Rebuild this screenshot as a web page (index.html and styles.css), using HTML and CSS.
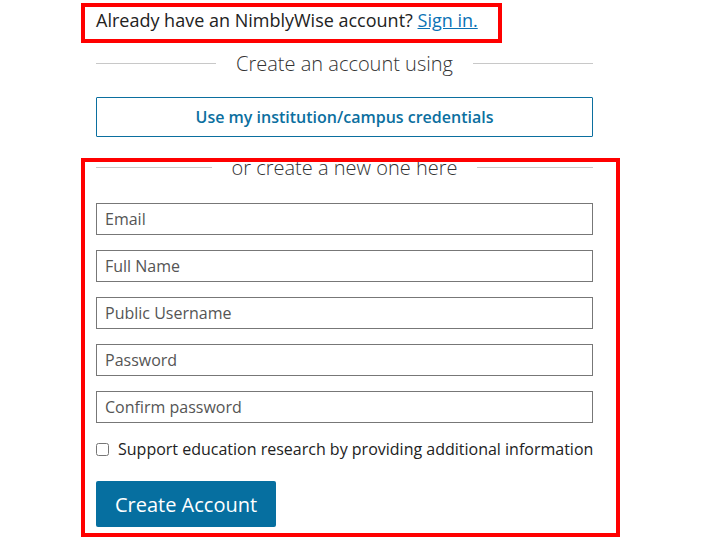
FILE: index.html
```html
<!DOCTYPE html>
<html>
<head>
<meta charset="utf-8">
<link rel="stylesheet" href="styles.css">
</head>
<body>
<div class="page">
  <div class="column">
    <p class="signin">Already have an NimblyWise account? <a href="#" class="link">Sign in.</a></p>
    <div class="divider divider-top"><span class="divider-text">Create an account using</span></div>
    <button class="btn-outline" type="button">Use my institution/campus credentials</button>
    <div class="divider divider-mid"><span class="divider-text">or create a new one here</span></div>
    <form class="form">
      <input class="field" type="text" placeholder="Email">
      <input class="field" type="text" placeholder="Full Name">
      <input class="field" type="text" placeholder="Public Username">
      <input class="field" type="password" placeholder="Password">
      <input class="field" type="password" placeholder="Confirm password">
      <label class="check-row"><input class="check" type="checkbox"><span>Support education research by providing additional information</span></label>
      <button class="btn-primary" type="button">Create Account</button>
    </form>
  </div>
  <div class="highlight highlight-signin"></div>
  <div class="highlight highlight-form"></div>
</div>
</body>
</html>
```
FILE: styles.css
```css
html, body {
  margin: 0;
  padding: 0;
  background: #fff;
}
body {
  font-family: "Open Sans", "DejaVu Sans", sans-serif;
  color: #222;
}
.page {
  position: relative;
  width: 712px;
  height: 553px;
  overflow: hidden;
}
.column {
  margin-left: 96px;
  width: 497px;
  display: flex;
  flex-direction: column;
}
.signin {
  margin: 0;
  padding-top: 8px;
  font-size: 18px;
  line-height: 24px;
  color: #222;
  white-space: nowrap;
}
.link {
  color: #0a72b5;
  text-decoration: underline;
}
.divider {
  display: flex;
  align-items: center;
  gap: 20px;
  height: 30px;
  color: #333;
  font-size: 20px;
  font-weight: 300;
}
.divider::before, .divider::after {
  content: "";
  flex: 1;
  height: 1px;
  background: #c8c8c8;
}
.divider-top {
  margin-top: 16px;
}
.divider-mid {
  margin-top: 15px;
}
.btn-outline {
  margin-top: 19px;
  height: 40px;
  border: 1px solid #0b6f9f;
  background: #fff;
  color: #0b6f9f;
  font-family: inherit;
  font-size: 16px;
  font-weight: 600;
  border-radius: 1px;
}
.form {
  margin: 21px 0 0;
  display: flex;
  flex-direction: column;
  gap: 15px;
}
.field {
  box-sizing: border-box;
  height: 32px;
  border: 1px solid #777;
  padding: 0 8px;
  font-family: inherit;
  font-size: 16px;
  color: #333;
  margin: 0;
}
.field::placeholder {
  color: #555;
}
.check-row {
  display: flex;
  align-items: center;
  gap: 9px;
  height: 24px;
  margin-top: -1px;
  font-size: 16px;
  color: #222;
  white-space: nowrap;
}
.check {
  margin: 0;
  width: 13px;
  height: 13px;
  flex-shrink: 0;
}
.btn-primary {
  align-self: flex-start;
  margin-top: 5px;
  width: 180px;
  height: 46px;
  border: none;
  border-radius: 2px;
  background: #066fa0;
  color: #fff;
  font-family: inherit;
  font-size: 20px;
  font-weight: 500;
}
.highlight {
  position: absolute;
  box-sizing: border-box;
  border: 4px solid #ff0000;
  pointer-events: none;
}
.highlight-signin {
  left: 81px;
  top: 3px;
  width: 421px;
  height: 40px;
}
.highlight-form {
  left: 81px;
  top: 158px;
  width: 539px;
  height: 379px;
}
```
